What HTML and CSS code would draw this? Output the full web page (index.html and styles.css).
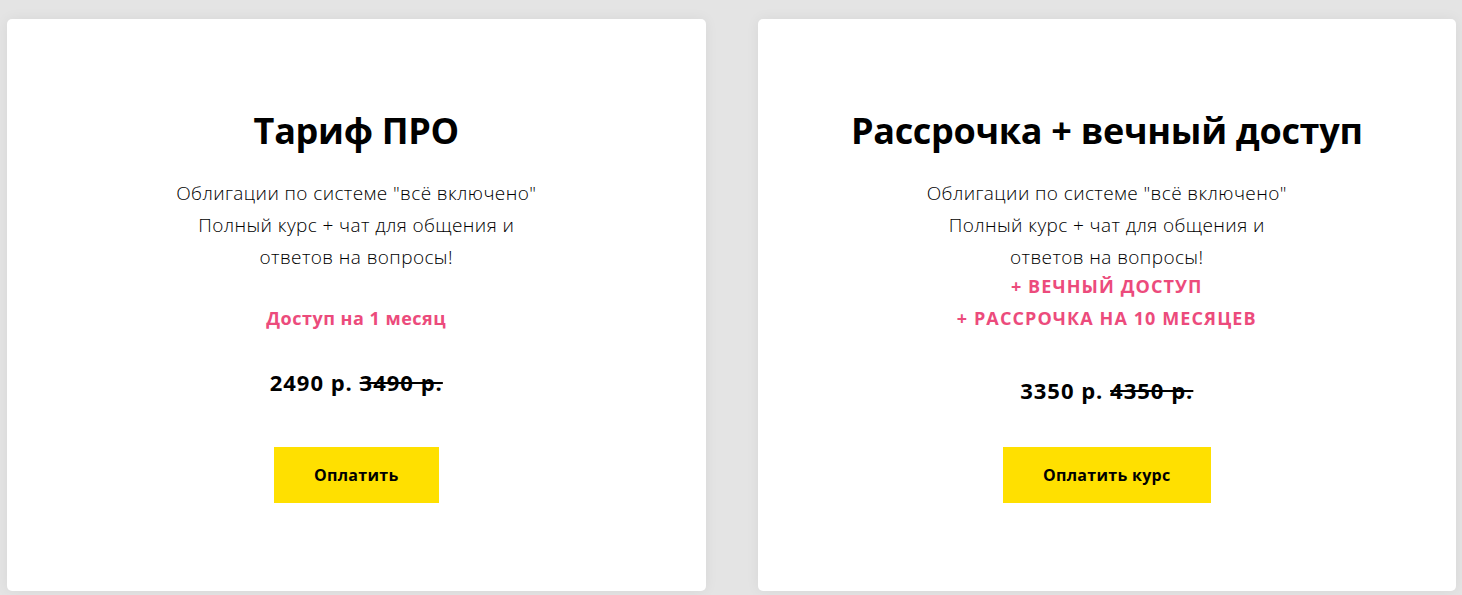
FILE: index.html
```html
<!DOCTYPE html>
<html lang="ru">
<head>
<meta charset="utf-8">
<title>Тарифы</title>
<link rel="stylesheet" href="styles.css">
</head>
<body>
<div class="plans">
  <div class="card">
    <h2 class="card-title">Тариф ПРО</h2>
    <p class="card-desc">Облигации по системе "всё включено"<br>Полный курс + чат для общения и<br>ответов на вопросы!</p>
    <div class="accent accent--gap">Доступ на 1 месяц</div>
    <p class="price">2490 р. <s>3490 р.</s></p>
    <a class="btn" href="#">Оплатить</a>
  </div>
  <div class="card card--wide">
    <h2 class="card-title">Рассрочка + вечный доступ</h2>
    <p class="card-desc">Облигации по системе "всё включено"<br>Полный курс + чат для общения и<br>ответов на вопросы!</p>
    <div class="accent accent--caps">+ ВЕЧНЫЙ ДОСТУП<br>+ РАССРОЧКА НА 10 МЕСЯЦЕВ</div>
    <p class="price">3350 р. <s>4350 р.</s></p>
    <a class="btn" href="#">Оплатить курс</a>
  </div>
</div>
</body>
</html>
```

FILE: styles.css
```css
html, body {
  margin: 0;
  padding: 0;
}
body {
  background: #e4e4e4;
  font-family: "Open Sans", "Noto Sans", sans-serif;
  color: #000;
  height: 595px;
  overflow: hidden;
}
.plans {
  display: flex;
  gap: 52px;
  padding: 19px 6px 0 7px;
}
.card {
  flex: 1;
  height: 572px;
  box-sizing: border-box;
  background: #fff;
  border-radius: 5px;
  box-shadow: 0 0 14px rgba(0, 0, 0, 0.06);
  text-align: center;
  padding-top: 90px;
}
.card-title {
  margin: 0;
  font-size: 36px;
  line-height: 43px;
  font-weight: 700;
  letter-spacing: -0.3px;
}
.card-desc {
  margin: 25px 0 0;
  font-size: 19px;
  line-height: 32px;
  font-weight: 300;
  letter-spacing: 0.4px;
}
.accent {
  margin-top: -3px;
  color: #ec4b7c;
  font-size: 18px;
  line-height: 32px;
  font-weight: 700;
  letter-spacing: 0.5px;
}
.accent--gap {
  margin-top: 29px;
}
.accent--caps {
  letter-spacing: 1.1px;
}
.price {
  margin: 33px 0 0;
  font-size: 22px;
  line-height: 30px;
  font-weight: 700;
  letter-spacing: 1px;
}
.price s {
  text-decoration-thickness: 2px;
}
.card--wide .price {
  margin-top: 41px;
}
.btn {
  display: inline-block;
  margin-top: 50px;
  height: 56px;
  line-height: 56px;
  padding: 0 40px;
  background: #ffe000;
  color: #000;
  font-size: 16px;
  font-weight: 700;
  letter-spacing: 0.3px;
  text-decoration: none;
}
.card--wide .btn {
  margin-top: 42px;
}
```
